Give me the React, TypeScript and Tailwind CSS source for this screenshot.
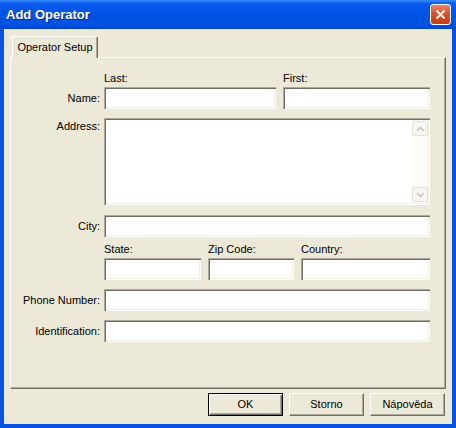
import React from 'react';

const FONT = "font-['Liberation_Sans',Arial,sans-serif]";
const SUNKEN =
  'bg-white shadow-[inset_1px_1px_0_#aca899,inset_2px_2px_0_#716f64,inset_-1px_-1px_0_#ffffff,inset_-2px_-2px_0_#f1efe2]';

function Box({ className = '' }: { className?: string }) {
  return <div className={`h-[22px] ${SUNKEN} ${className}`} />;
}

function Row({ label, children, top }: { label: string; children: React.ReactNode; top?: boolean }) {
  return (
    <div className={`flex ${top ? 'items-start' : 'items-center'}`}>
      <div className={`w-[89px] text-right leading-[13px] ${top ? 'pt-[2px]' : ''}`}>{label}</div>
      <div className="ml-[4px] flex-1">{children}</div>
    </div>
  );
}

function ScrollArrow({ up }: { up?: boolean }) {
  return (
    <div className="h-[15px] flex items-center justify-center rounded-[2px] border border-[#e3e1d6] bg-[#f7f6f1]">
      <svg width="9" height="6" viewBox="0 0 9 6">
        <path
          d={up ? 'M1 5 L4.5 1.5 L8 5' : 'M1 1 L4.5 4.5 L8 1'}
          fill="none"
          stroke="#c9c7bb"
          strokeWidth="1.6"
        />
      </svg>
    </div>
  );
}

function Button({ label, primary }: { label: string; primary?: boolean }) {
  return (
    <div
      className={`w-[75px] h-[23px] flex items-center justify-center bg-[#ece9d8] ${
        primary
          ? 'border border-black shadow-[inset_1px_1px_0_#ffffff,inset_-1px_-1px_0_#716f64,inset_-2px_-2px_0_#aca899]'
          : 'border border-t-white border-l-white border-r-[#716f64] border-b-[#716f64] shadow-[inset_-1px_-1px_0_#aca899]'
      }`}
    >
      {label}
    </div>
  );
}

export default function App() {
  return (
    <div className={`w-[456px] h-[428px] flex flex-col bg-[#0554e3] ${FONT} text-[11px] text-black`}>
      {/* title bar */}
      <div className="h-[29px] flex items-center justify-between pl-[6px] pr-[5px] bg-[linear-gradient(180deg,#3b8cfb_0%,#0a5cf0_12%,#0054e3_45%,#0052e0_85%,#0043cc_100%)]">
        <span className="text-[13px] font-bold text-white pt-[1px] [text-shadow:1px_1px_0_#0a2a8a]">
          Add Operator
        </span>
        <div className="w-[21px] h-[21px] rounded-[3px] border border-white flex items-center justify-center bg-[linear-gradient(180deg,#e8876a_0%,#d9532f_45%,#c43d1c_100%)]">
          <svg width="11" height="11" viewBox="0 0 11 11">
            <path d="M1.5 1.5 L9.5 9.5 M9.5 1.5 L1.5 9.5" stroke="#ffffff" strokeWidth="2" />
          </svg>
        </div>
      </div>

      {/* body */}
      <div className="flex-1 mx-[4px] mb-[4px] bg-[#ece9d8] flex flex-col pt-[7px]">
        {/* tab strip */}
        <div className="flex pl-[8px]">
          <div className="relative z-10 -mb-[1px] h-[22px] w-[86px] flex items-center justify-center bg-[#ece9d8] rounded-t-[2px] border-t border-l border-white border-r border-r-[#716f64] shadow-[inset_-1px_0_0_#aca899]">
            Operator Setup
          </div>
        </div>

        {/* panel */}
        <div className="mx-[6px] h-[332px] border-t border-l border-white border-r border-b border-r-[#716f64] border-b-[#716f64] shadow-[inset_-1px_-1px_0_#aca899] pt-[8px] pr-[15px] flex flex-col">
          <Row label="">
            <div className="grid grid-cols-[172px_1fr] gap-[7px] h-[21px] items-end pb-[2px] leading-[13px]">
              <span>Last:</span>
              <span>First:</span>
            </div>
          </Row>
          <Row label="Name:">
            <div className="grid grid-cols-[172px_1fr] gap-[7px]">
              <Box />
              <Box />
            </div>
          </Row>
          <div className="h-[9px]" />
          <Row label="Address:" top>
            <div className={`h-[87px] flex p-[2px] ${SUNKEN}`}>
              <div className="flex-1" />
              <div className="w-[16px] flex flex-col justify-between pt-[1px] pb-[1px] bg-[#fbfbf8]">
                <ScrollArrow up />
                <ScrollArrow />
              </div>
            </div>
          </Row>
          <div className="h-[10px]" />
          <Row label="City:">
            <Box />
          </Row>
          <Row label="">
            <div className="grid grid-cols-[97px_86px_1fr] gap-[7px] h-[21px] items-end pb-[2px] leading-[13px]">
              <span>State:</span>
              <span>Zip Code:</span>
              <span>Country:</span>
            </div>
          </Row>
          <Row label="">
            <div className="grid grid-cols-[97px_86px_1fr] gap-[7px]">
              <Box />
              <Box />
              <Box />
            </div>
          </Row>
          <div className="h-[9px]" />
          <Row label="Phone Number:">
            <Box />
          </Row>
          <div className="h-[9px]" />
          <Row label="Identification:">
            <Box />
          </Row>
        </div>

        {/* buttons */}
        <div className="flex justify-end gap-[6px] mt-[4px] pr-[7px]">
          <Button label="OK" primary />
          <Button label="Storno" />
          <Button label="Nápověda" />
        </div>
      </div>
    </div>
  );
}
